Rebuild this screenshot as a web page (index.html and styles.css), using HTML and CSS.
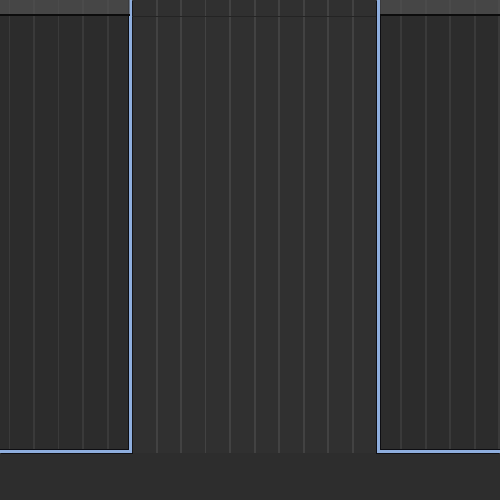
FILE: index.html
```html
<!DOCTYPE html>
<html lang="en">
<head>
  <meta charset="UTF-8">
  <meta name="viewport" content="width=device-width, initial-scale=1.0">
  <title>Timeline</title>
  <link rel="stylesheet" href="styles.css">
</head>
<body>
  <div class="tracks">
    <div class="panel panel-left">
      <div class="panel-head"></div>
    </div>
    <div class="gap">
      <div class="gap-head"></div>
    </div>
    <div class="panel panel-right">
      <div class="panel-head"></div>
    </div>
  </div>
  <div class="footer"></div>
</body>
</html>
```

FILE: styles.css
```css
* {
  box-sizing: border-box;
}
html, body {
  margin: 0;
  height: 100%;
  background: #2d2d2d;
  overflow: hidden;
}
.tracks {
  display: flex;
  height: 453px;
  background-color: #2f2f2f;
  background-image: repeating-linear-gradient(90deg,
    transparent 0, transparent 8.5px,
    #434343 8.5px, #434343 10.5px,
    transparent 10.5px, transparent 24.5px);
}
.panel {
  height: 453px;
  background: rgba(40, 40, 40, 0.3);
  border-bottom: 3px solid #8eaede;
  box-shadow: inset 0 -1px 0 #0e0e12, 0 1px 0 #101014;
}
.panel-left {
  width: 132px;
  border-right: 3px solid #8eaede;
  box-shadow: inset -1px -1px 0 #0e0e12, 1px 1px 0 #101014;
}
.panel-right {
  width: 123px;
  border-left: 3px solid #8eaede;
  box-shadow: inset 1px -1px 0 #0e0e12, -1px 1px 0 #101014;
}
.panel-head {
  height: 16px;
  background: rgba(84, 84, 84, 0.65);
  border-bottom: 2px solid #0c0c0c;
}
.panel-left .panel-head {
  margin-right: -1px;
}
.gap {
  flex: 1;
  background: rgba(60, 60, 60, 0.1);
}
.gap-head {
  height: 17px;
  border-bottom: 1px solid #242424;
}
.footer {
  height: 47px;
  background: #2d2d2d;
}
```
